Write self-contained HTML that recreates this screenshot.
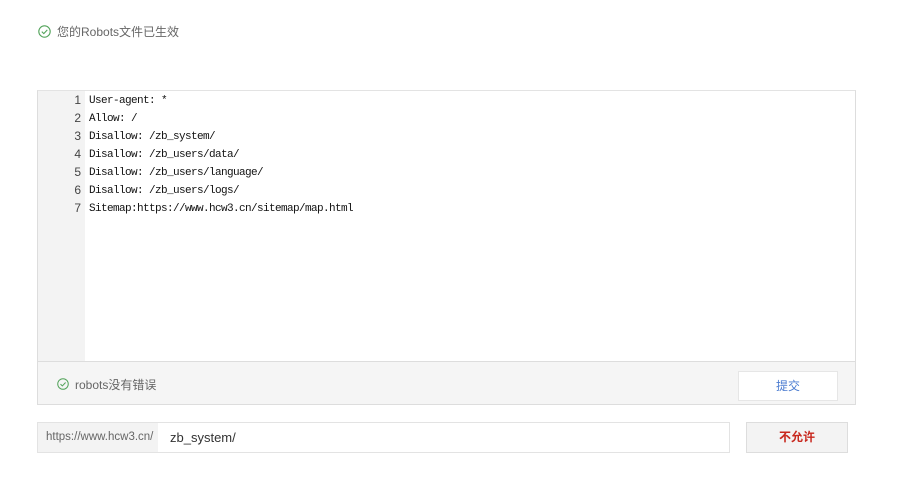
<!DOCTYPE html>
<html><head><meta charset="utf-8"><style>
*{margin:0;padding:0;box-sizing:border-box}
body{width:900px;height:477px;background:#fff;font-family:"Liberation Sans","Noto Sans CJK SC",sans-serif;position:relative;overflow:hidden}
.a{position:absolute}
.ok{font-size:12px;color:#666;display:flex;align-items:center}
.ok svg{margin-right:6px}
.code{font-family:"Liberation Mono","Noto Sans CJK SC",monospace;font-size:11px;letter-spacing:-0.6px;color:#111;line-height:18px}
.num{font-size:12px;letter-spacing:0;font-family:"Liberation Sans",sans-serif;color:#444}
</style></head><body>
<div class="a ok" style="left:38px;top:23px;height:16px"><svg width="13" height="13" viewBox="0 0 13 13"><circle cx="6.5" cy="6.5" r="5.7" fill="none" stroke="#52a35a" stroke-width="1.1"/><path d="M3.8 6.6l2 2 3.5-3.7" fill="none" stroke="#52a35a" stroke-width="1.1"/></svg>您的Robots文件已生效</div>
<div class="a" style="left:37px;top:90px;width:819px;height:315px;border:1px solid #ddd;border-top:1px solid #e3e3e3"></div>
<div class="a" style="left:38px;top:91px;width:47px;height:270px;background:#f3f3f3"></div>
<div class="a code num" style="left:38px;top:91px;width:43px;text-align:right">1<br>2<br>3<br>4<br>5<br>6<br>7</div>
<div class="a code" style="left:89px;top:92px;white-space:pre">User-agent: *
Allow: /
Disallow: /zb_system/
Disallow: /zb_users/data/
Disallow: /zb_users/language/
Disallow: /zb_users/logs/
Sitemap:https://www.hcw3.cn/sitemap/map.html</div>
<div class="a" style="left:38px;top:361px;width:817px;height:43px;background:#f5f5f5;border-top:1px solid #ddd"></div>
<div class="a ok" style="left:57px;top:376px;height:16px"><svg width="12" height="12" viewBox="0 0 13 13"><circle cx="6.5" cy="6.5" r="5.7" fill="none" stroke="#52a35a" stroke-width="1.1"/><path d="M3.8 6.6l2 2 3.5-3.7" fill="none" stroke="#52a35a" stroke-width="1.1"/></svg>robots没有错误</div>
<div class="a" style="left:738px;top:371px;width:100px;height:30px;background:#fff;border:1px solid #e6e6e6;color:#4a7bd0;font-size:12px;text-align:center;line-height:28px">提交</div>
<div class="a" style="left:37px;top:422px;width:693px;height:31px;border:1px solid #e3e3e3;background:#fff"></div>
<div class="a" style="left:38px;top:423px;width:120px;height:29px;background:#f3f3f3;color:#666;font-size:11.5px;line-height:29px;padding-left:8px">https://www.hcw3.cn/</div>
<div class="a" style="left:170px;top:423px;height:29px;line-height:29px;font-size:13px;color:#333">zb_system/</div>
<div class="a" style="left:746px;top:422px;width:102px;height:31px;background:#f3f3f3;border:1px solid #ddd;color:#c8281e;font-size:12px;font-weight:bold;text-align:center;line-height:29px">不允许</div>
</body></html>
